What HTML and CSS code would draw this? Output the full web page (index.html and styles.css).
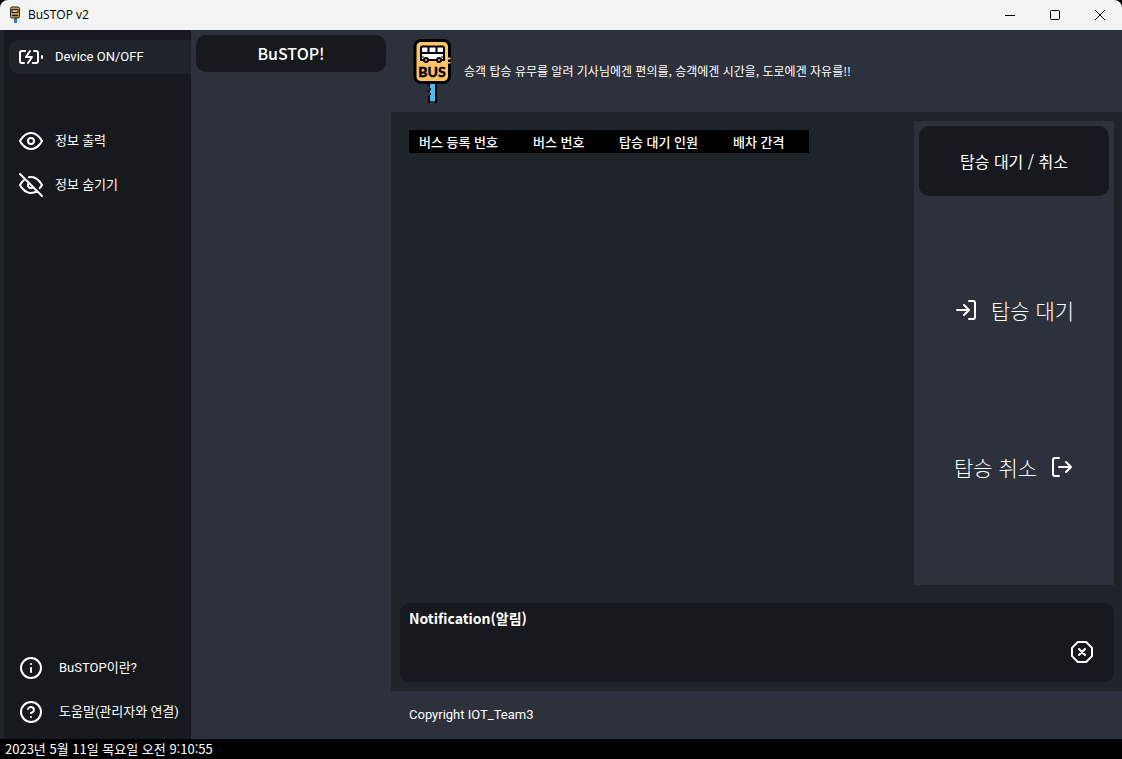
FILE: index.html
```html
<!DOCTYPE html>
<html lang="ko">
<head>
<meta charset="utf-8">
<title>BuSTOP v2</title>
<link rel="stylesheet" href="styles.css">
</head>
<body>
<div class="window">
  <header class="titlebar">
    <svg class="app-icon" viewBox="0 0 12 18" aria-hidden="true">
      <path d="M5 12h3v5H5z" fill="#2f7fa8"/>
      <rect x="1.500" y="1" width="9" height="11" rx="1.500" fill="#d99a3c" stroke="#222" stroke-width="1"/>
      <path d="M3 3.500h6v3H3z" fill="#bbb" stroke="#222"/>
      <path d="M3 9.500h6" stroke="#222" stroke-width="1.500"/>
    </svg>
    <span class="app-title">BuSTOP v2</span>
    <button class="win-btn" aria-label="Minimize"><svg viewBox="0 0 12 12"><path d="M1 6.500h10"/></svg></button>
    <button class="win-btn" aria-label="Maximize"><svg viewBox="0 0 12 12"><rect x="1.500" y="1.500" width="9" height="9" rx="1"/></svg></button>
    <button class="win-btn" aria-label="Close"><svg viewBox="0 0 12 12"><path d="M1 1l10 10M11 1L1 11"/></svg></button>
  </header>

  <div class="body">
    <nav class="sidebar">
      <button class="nav-btn active">
        <svg class="icon" viewBox="0 0 24 24"><path d="M5 18H3a2 2 0 0 1-2-2V8a2 2 0 0 1 2-2h3.190M15 6h2a2 2 0 0 1 2 2v8a2 2 0 0 1-2 2h-3.190M23 13v-2"/><path d="M11 6l-4 6h6l-4 6"/></svg>
        <span>Device ON/OFF</span>
      </button>
      <div class="nav-group">
        <button class="nav-btn">
          <svg class="icon" viewBox="0 0 24 24"><path d="M1 12s4-8 11-8 11 8 11 8-4 8-11 8-11-8-11-8z"/><circle cx="12" cy="12" r="3"/></svg>
          <span>정보 출력</span>
        </button>
        <button class="nav-btn">
          <svg class="icon" viewBox="0 0 24 24"><path d="M17.940 17.940A10.070 10.070 0 0 1 12 20c-7 0-11-8-11-8a18.450 18.450 0 0 1 5.060-5.940M9.900 4.240A9.120 9.120 0 0 1 12 4c7 0 11 8 11 8a18.500 18.500 0 0 1-2.160 3.190m-6.720-1.070a3 3 0 1 1-4.240-4.240M1 1l22 22"/></svg>
          <span>정보 숨기기</span>
        </button>
      </div>
      <div class="nav-group bottom">
        <button class="nav-btn">
          <svg class="icon" viewBox="0 0 24 24"><circle cx="12" cy="12" r="10"/><path d="M12 16v-4M12 8h.010"/></svg>
          <span>BuSTOP이란?</span>
        </button>
        <button class="nav-btn">
          <svg class="icon" viewBox="0 0 24 24"><circle cx="12" cy="12" r="10"/><path d="M9.090 9a3 3 0 0 1 5.830 1c0 2-3 3-3 3M12 17h.010"/></svg>
          <span>도움말(관리자와 연결)</span>
        </button>
      </div>
    </nav>

    <aside class="center-menu"><h1 class="brand">BuSTOP!</h1></aside>

    <main class="main">
      <div class="banner">
        <svg class="logo" viewBox="0 0 40 64" role="img" aria-label="BUS">
          <path d="M17 44h6v18h-6z" fill="#4fb9f5"/>
          <path d="M16 44v4M16 51v2M16 57v7M23 44v20" fill="none" stroke="#000" stroke-width="2"/>
          <path d="M17.500 49v2M17.500 54v2" stroke="#000"/>
          <rect x="2" y="1.500" width="34.500" height="42" rx="6" fill="#ffc266" stroke="#000" stroke-width="3"/>
          <path d="M36 18.500v2M36 23v1.500" stroke="#ffc266" stroke-width="3"/>
          <path d="M8 9q0-1.500 1.500-1.500h20q1.500 0 1.500 1.500v12H8z" fill="#fff" stroke="#000" stroke-width="2"/>
          <path d="M8 14h23M15.500 8v6M23.500 8v6" stroke="#000" stroke-width="2"/>
          <path d="M8 18h3M28 18h3" stroke="#000"/>
          <circle cx="13" cy="21" r="2" fill="#ffc266" stroke="#000" stroke-width="2"/>
          <circle cx="26" cy="21" r="2" fill="#ffc266" stroke="#000" stroke-width="2"/>
          <text x="19" y="38" class="sign-text" text-anchor="middle">BUS</text>
        </svg>
        <p class="slogan">승객 탑승 유무를 알려 기사님에겐 편의를, 승객에겐 시간을, 도로에겐 자유를!!</p>
      </div>
      <div class="content">
        <div class="work">
          <div class="table-area">
            <table class="bus-table">
              <thead><tr><th class="wide">버스 등록 번호</th><th>버스 번호</th><th class="wide">탑승 대기 인원</th><th>배차 간격</th></tr></thead>
            </table>
          </div>
          <section class="ride">
            <h2 class="ride-title">탑승 대기 / 취소</h2>
            <div class="ride-actions">
              <button class="ride-btn">
                <svg class="icon" viewBox="0 0 24 24"><path d="M15 3h4a2 2 0 0 1 2 2v14a2 2 0 0 1-2 2h-4M10 17l5-5-5-5M15 12H3"/></svg>
                <span>탑승 대기</span>
              </button>
              <button class="ride-btn">
                <span>탑승 취소</span>
                <svg class="icon" viewBox="0 0 24 24"><path d="M9 21H5a2 2 0 0 1-2-2V5a2 2 0 0 1 2-2h4M16 17l5-5-5-5M21 12H9"/></svg>
              </button>
            </div>
          </section>
        </div>
        <section class="notice">
          <h2 class="notice-title">Notification(알림)</h2>
          <button class="notice-close" aria-label="알림 닫기"><svg class="icon" viewBox="0 0 24 24"><path d="M7.860 2h8.280L22 7.860v8.280L16.140 22H7.860L2 16.140V7.860L7.860 2zM15 9l-6 6M9 9l6 6"/></svg></button>
        </section>
      </div>
      <footer class="footer">Copyright IOT_Team3</footer>
    </main>
  </div>
  <div class="status">2023년 5월 11일 목요일 오전 9:10:55</div>
</div>
</body>
</html>
```
FILE: styles.css
```css
* { box-sizing: border-box; }

body {
  margin: 0;
  background: #000;
  color: #fff;
  font: 13px/20px "Noto Sans CJK KR", sans-serif;
}

h1, h2, p { margin: 0; font-weight: 400; }

button {
  padding: 0;
  border: 0;
  background: none;
  color: inherit;
  font: inherit;
}

.sign-text { font: 700 14px "Lato", sans-serif; fill: #000; stroke: #000; stroke-width: 0.5px; }

.icon {
  flex: none;
  display: block;
  width: 24px;
  height: 24px;
  fill: none;
  stroke: #fff;
  stroke-width: 2;
  stroke-linecap: round;
  stroke-linejoin: round;
}

.window {
  display: flex;
  flex-direction: column;
  min-height: 100vh;
  border-radius: 8px 8px 6px 6px;
  overflow: hidden;
}

.titlebar {
  display: flex;
  align-items: center;
  height: 30px;
  padding-left: 9px;
  background: #f3f3f3;
  color: #000;
}

.app-icon { width: 12px; height: 18px; }

.app-title {
  flex: 1;
  padding-left: 7px;
  font: 12px/16px "Open Sans", sans-serif;
}

.win-btn {
  display: flex;
  align-items: center;
  justify-content: center;
  width: 45px;
  height: 30px;
}

.win-btn svg { width: 12px; height: 12px; fill: none; stroke: #000; stroke-width: 1; }

.body { flex: 1; display: flex; background: #1f232a; }

.sidebar {
  display: flex;
  flex-direction: column;
  width: 187px;
  margin-left: 4px;
  padding: 10px 0 5px 5px;
  background: #16191d;
}

.nav-btn {
  display: flex;
  align-items: center;
  gap: 12px;
  width: 100%;
  height: 34px;
  padding-left: 10px;
  font-family: "Roboto", "Noto Sans CJK KR", sans-serif;
  text-align: left;
  white-space: nowrap;
}

.nav-btn.active { border-radius: 10px 0 0 10px; background: #1f232a; }

.nav-group { display: flex; flex-direction: column; gap: 10px; margin-top: 50px; }

.nav-group.bottom { margin-top: auto; padding-bottom: 5px; }

.bottom .nav-btn { gap: 16px; }

.center-menu { width: 200px; padding: 5px; background: #2c313c; }

.brand {
  border-radius: 10px;
  background: #16191d;
  font: 500 16px/37px "Noto Sans CJK KR", sans-serif;
  text-align: center;
}

.main { flex: 1; display: flex; flex-direction: column; min-width: 0; }

.banner {
  display: flex;
  align-items: center;
  gap: 11px;
  height: 82px;
  padding-left: 22px;
  background: #2c313c;
}

.logo { flex: none; width: 40px; height: 64px; }

.slogan { font-size: 12px; }

.content {
  flex: 1;
  display: flex;
  flex-direction: column;
  gap: 18px;
  padding: 9px 8px 9px 9px;
}

.work { flex: 1; display: flex; }

.table-area { flex: 1; padding: 9px; }

.bus-table {
  width: 400px;
  table-layout: fixed;
  border-collapse: collapse;
  background: #000;
}

.bus-table th {
  width: 86px;
  height: 23px;
  padding: 0 0 0 10px;
  font-weight: 500;
  text-align: left;
  white-space: nowrap;
}

.bus-table th.wide { width: 114px; }

.ride {
  display: flex;
  flex-direction: column;
  width: 200px;
  padding: 5px;
  background: #2c313c;
}

.ride-title {
  border-radius: 10px;
  background: #16191d;
  font-size: 16px;
  line-height: 70px;
  text-align: center;
}

.ride-actions {
  flex: 1;
  display: flex;
  flex-direction: column;
  justify-content: center;
  gap: 127px;
}

.ride-btn {
  display: flex;
  align-items: center;
  justify-content: center;
  gap: 13px;
  font-size: 21px;
  font-weight: 300;
  line-height: 30px;
}

.notice {
  display: flex;
  justify-content: space-between;
  height: 79px;
  padding: 5px 20px 5px 9px;
  border-radius: 10px;
  background: #16191d;
}

.notice-title { font-size: 14px; font-weight: 700; }

.notice-close { align-self: flex-end; padding-bottom: 13px; }

.footer {
  padding: 14px 18px;
  background: #2c313c;
  font-family: "Roboto", "Noto Sans CJK KR", sans-serif;
}

.status { padding-left: 5px; background: #000; font-size: 13px; line-height: 20px; }
```
